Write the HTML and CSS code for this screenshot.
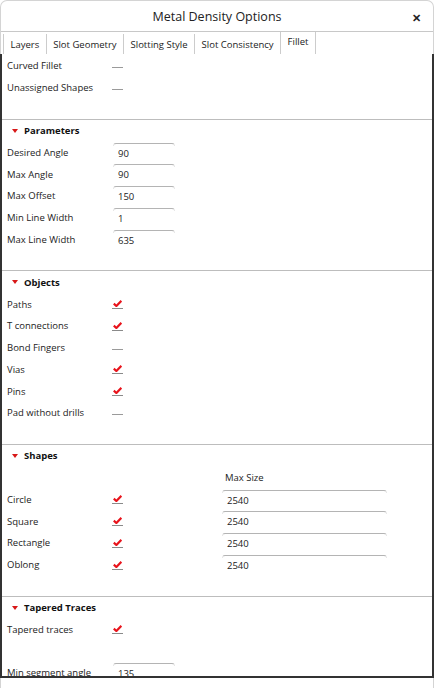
FILE: index.html
```html
<!DOCTYPE html>
<html>
<head>
<meta charset="utf-8">
<link rel="stylesheet" href="styles.css">
</head>
<body>
<div class="dialog">
  <header class="titlebar">
    <span class="title">Metal Density Options</span>
    <span class="close">✕</span>
  </header>
  <nav class="tabs">
    <div class="tab">Layers</div>
    <div class="tab">Slot Geometry</div>
    <div class="tab">Slotting Style</div>
    <div class="tab">Slot Consistency</div>
    <div class="tab active">Fillet</div>
  </nav>
  <div class="panel">
    <section class="group">
      <div class="row"><span class="label">Curved Fillet</span><span class="box off"></span></div>
      <div class="row"><span class="label">Unassigned Shapes</span><span class="box off"></span></div>
    </section>

    <section class="group">
      <div class="group-head"><span class="caret"></span>Parameters</div>
      <div class="row"><span class="label">Desired Angle</span><span class="field short">90</span></div>
      <div class="row"><span class="label">Max Angle</span><span class="field short">90</span></div>
      <div class="row"><span class="label">Max Offset</span><span class="field short">150</span></div>
      <div class="row"><span class="label">Min Line Width</span><span class="field short">1</span></div>
      <div class="row"><span class="label">Max Line Width</span><span class="field short">635</span></div>
    </section>

    <section class="group">
      <div class="group-head"><span class="caret"></span>Objects</div>
      <div class="row"><span class="label">Paths</span><span class="box on"><svg viewBox="0 0 9 7" width="9" height="7"><path d="M0.8 3.6 L3.4 6 L8.4 0.8" fill="none" stroke="#e8141c" stroke-width="2.2"/></svg></span></div>
      <div class="row"><span class="label">T connections</span><span class="box on"><svg viewBox="0 0 9 7" width="9" height="7"><path d="M0.8 3.6 L3.4 6 L8.4 0.8" fill="none" stroke="#e8141c" stroke-width="2.2"/></svg></span></div>
      <div class="row"><span class="label">Bond Fingers</span><span class="box off"></span></div>
      <div class="row"><span class="label">Vias</span><span class="box on"><svg viewBox="0 0 9 7" width="9" height="7"><path d="M0.8 3.6 L3.4 6 L8.4 0.8" fill="none" stroke="#e8141c" stroke-width="2.2"/></svg></span></div>
      <div class="row"><span class="label">Pins</span><span class="box on"><svg viewBox="0 0 9 7" width="9" height="7"><path d="M0.8 3.6 L3.4 6 L8.4 0.8" fill="none" stroke="#e8141c" stroke-width="2.2"/></svg></span></div>
      <div class="row"><span class="label">Pad without drills</span><span class="box off"></span></div>
    </section>

    <section class="group">
      <div class="group-head"><span class="caret"></span>Shapes</div>
      <div class="row"><span class="label"></span><span></span><span class="colhead">Max Size</span></div>
      <div class="row"><span class="label">Circle</span><span class="box on"><svg viewBox="0 0 9 7" width="9" height="7"><path d="M0.8 3.6 L3.4 6 L8.4 0.8" fill="none" stroke="#e8141c" stroke-width="2.2"/></svg></span><span class="field wide">2540</span></div>
      <div class="row"><span class="label">Square</span><span class="box on"><svg viewBox="0 0 9 7" width="9" height="7"><path d="M0.8 3.6 L3.4 6 L8.4 0.8" fill="none" stroke="#e8141c" stroke-width="2.2"/></svg></span><span class="field wide">2540</span></div>
      <div class="row"><span class="label">Rectangle</span><span class="box on"><svg viewBox="0 0 9 7" width="9" height="7"><path d="M0.8 3.6 L3.4 6 L8.4 0.8" fill="none" stroke="#e8141c" stroke-width="2.2"/></svg></span><span class="field wide">2540</span></div>
      <div class="row"><span class="label">Oblong</span><span class="box on"><svg viewBox="0 0 9 7" width="9" height="7"><path d="M0.8 3.6 L3.4 6 L8.4 0.8" fill="none" stroke="#e8141c" stroke-width="2.2"/></svg></span><span class="field wide">2540</span></div>
    </section>

    <section class="group">
      <div class="group-head"><span class="caret"></span>Tapered Traces</div>
      <div class="row"><span class="label">Tapered traces</span><span class="box on"><svg viewBox="0 0 9 7" width="9" height="7"><path d="M0.8 3.6 L3.4 6 L8.4 0.8" fill="none" stroke="#e8141c" stroke-width="2.2"/></svg></span></div>
      <div class="row"></div>
      <div class="row"><span class="label">Min segment angle</span><span class="field short">135</span></div>
      <div class="row"></div>
    </section>
  </div>
</div>
</body>
</html>
```

FILE: styles.css
```css
* { box-sizing: border-box; }

html, body {
  margin: 0;
  padding: 0;
  background: #ffffff;
}

body {
  width: 434px;
  height: 688px;
  overflow: hidden;
  font-family: "Open Sans", "Noto Sans", sans-serif;
  font-size: 9.5px;
  color: #222222;
}

.dialog {
  width: 434px;
  height: 688px;
  border: 1px solid #d4d4d4;
  border-bottom: none;
  border-radius: 7px 7px 0 0;
  background: #ffffff;
}

.titlebar {
  height: 31px;
  border-bottom: 1px solid #c8c8c8;
  display: flex;
  align-items: center;
  justify-content: center;
  position: relative;
}

.title {
  font-size: 12.5px;
  color: #222222;
  margin-top: 1px;
}

.close {
  position: absolute;
  right: 12px;
  top: 9px;
  font-size: 11px;
  font-weight: bold;
  color: #222222;
}

.tabs {
  display: flex;
  align-items: flex-end;
  height: 22px;
  padding-left: 2px;
}

.tab {
  height: 20px;
  line-height: 20px;
  padding: 1px 6.5px 0 6.5px;
  border-left: 1px solid #cccccc;
  font-size: 9.5px;
  white-space: nowrap;
}

.tab.active {
  height: 22px;
  line-height: 20px;
  padding-top: 0;
  border-right: 1px solid #cccccc;
}

.panel {
  margin: 0 -1px;
  height: 624px;
  border-left: 2px solid #333333;
  border-right: 2px solid #333333;
  border-bottom: 2px solid #333333;
  overflow: hidden;
}

.group {
  padding-bottom: 20px;
  border-bottom: 1px solid #bdbdbd;
}

.group:first-child {
  padding-top: 1px;
}

.group:last-child {
  border-bottom: none;
}

.group-head {
  height: 22px;
  display: flex;
  align-items: center;
  padding-left: 10px;
  font-weight: bold;
  font-size: 9.5px;
  color: #111111;
}

.caret {
  width: 0;
  height: 0;
  border-left: 3px solid transparent;
  border-right: 3px solid transparent;
  border-top: 4px solid #d81818;
  margin-right: 6px;
}

.row {
  height: 21.75px;
  display: grid;
  grid-template-columns: 106px 109px 165px;
  align-items: center;
  padding-left: 5px;
}

.label {
  white-space: nowrap;
}

.colhead {
  padding-left: 3px;
}

.box {
  width: 11px;
  height: 9px;
  margin-left: -1px;
  border-bottom: 1px solid #8a8a8a;
  display: flex;
  align-items: flex-end;
  justify-content: center;
  margin-top: 1px;
}

.box svg {
  display: block;
  margin-bottom: 1px;
}

.box.off {
  height: 5px;
  border-bottom-color: #9a9a9a;
  margin-top: 0;
}

.field {
  align-self: stretch;
  margin-top: 1px;
  border-top: 1px solid #b4b4b4;
  border-left: 1px solid #e6e6e6;
  border-right: 1px solid #e6e6e6;
  border-radius: 3px 3px 0 0;
  padding-left: 4px;
  line-height: 19px;
  height: 3px;
  overflow: visible;
  white-space: nowrap;
}

.field.short { width: 62px; }
.field.wide { width: 165px; }
```
